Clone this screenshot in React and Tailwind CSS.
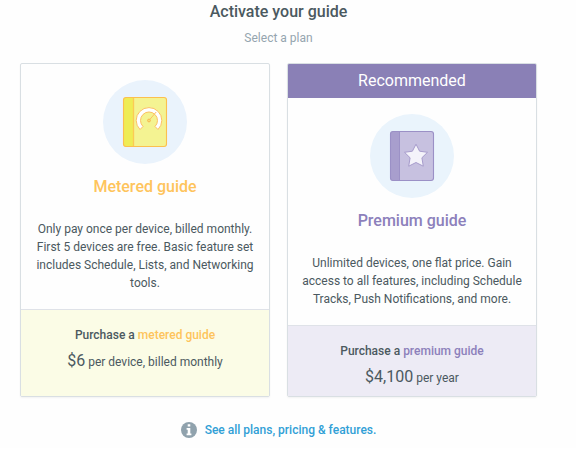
function MeteredIcon() {
  return (
    <svg viewBox="0 0 84 84" className="size-21" aria-hidden="true">
      <circle cx="42" cy="42" r="42" fill="#eaf3fc" />
      <rect x="20.5" y="17.5" width="43" height="49" rx="2.5" fill="#f4f392" />
      <path d="M30.5 17.5H23a2.5 2.5 0 0 0-2.5 2.5v44a2.5 2.5 0 0 0 2.5 2.5h7.5z" fill="#efec55" />
      <path d="M30.5 17.5v49" stroke="#fcca55" strokeWidth="1.3" />
      <rect x="20.5" y="17.5" width="43" height="49" rx="2.5" fill="none" stroke="#fcc04e" strokeWidth="1.1" />
      <path
        d="M37 49.5a12.8 12.8 0 1 1 18 0l-3-3a8.5 8.5 0 1 0-12 0z"
        fill="#fff"
        stroke="#fcc062"
        strokeWidth="1"
        strokeLinejoin="round"
      />
      <path d="M46.6 39.7l6.6-7.7" stroke="#fcc062" strokeWidth="1" />
      <circle cx="46" cy="40.5" r="1.4" fill="#f4e37a" stroke="#f9b84f" strokeWidth="1" />
    </svg>
  );
}

function PremiumIcon() {
  return (
    <svg viewBox="0 0 84 84" className="size-21" aria-hidden="true">
      <circle cx="42" cy="42" r="42" fill="#eaf4fc" />
      <rect x="20.5" y="17.5" width="43" height="49" rx="2.5" fill="#c7c1e0" />
      <path d="M29.5 17.5H23a2.5 2.5 0 0 0-2.5 2.5v44a2.5 2.5 0 0 0 2.5 2.5h6.5z" fill="#a89ecd" />
      <path d="M29.5 17.5v49" stroke="#9c91c6" strokeWidth="1" />
      <rect x="20.5" y="17.5" width="43" height="49" rx="2.5" fill="none" stroke="#9b90c6" strokeWidth="1.1" />
      <path
        d="M46 30.2l3.6 7 7.9 1.1-5.6 5.5 1.4 8.4-7.3-3.7-7.3 3.7 1.4-8.4-5.6-5.5 7.9-1.1z"
        fill="#f4f3fa"
        stroke="#a79ccc"
        strokeWidth="1"
        strokeLinejoin="round"
      />
    </svg>
  );
}

function InfoIcon() {
  return (
    <svg viewBox="0 0 16 16" className="size-4" aria-hidden="true">
      <circle cx="8" cy="8" r="8" fill="#90a2ad" />
      <path d="M6.7 2.2h2.6v2.4H6.7zM5.6 6h3.7v5.6h1.1v1.7H5.6v-1.7h1.1V7.7H5.6z" fill="#fff" />
    </svg>
  );
}

function PlanCard({ banner, icon, title, accent, description, footerTone, planName, price, unit }) {
  return (
    <article className="flex min-w-0 flex-1 flex-col overflow-hidden rounded-xs border border-[#d9dfe3] text-center shadow-xs">
      {banner && (
        <div className="bg-[#8a80b6] text-base leading-[34px] text-white">{banner}</div>
      )}
      <div className="flex flex-col items-center px-3 pt-4 pb-[17px]">
        {icon}
        <h2 className={`mt-[13px] text-base leading-5 font-medium ${accent}`}>{title}</h2>
        <p className="mt-[23px] text-xs leading-[18px]">{description}</p>
      </div>
      <div className={`flex-1 border-t border-[#dfe2e8] px-3 pt-[15px] pb-1.5 ${footerTone}`}>
        <h3 className="text-xs leading-5 font-medium">
          Purchase a <span className={accent}>{planName}</span>
        </h3>
        <p className="mt-1 text-xs leading-6">
          <span className="text-base leading-6">{price}</span> {unit}
        </p>
      </div>
    </article>
  );
}

export default function App() {
  return (
    <main className="bg-[#fefefe] pr-[39px] pb-2 pl-5 font-['Roboto','Liberation_Sans',sans-serif] text-[#4b5960]">
      <header className="text-center">
        <h1 className="text-base leading-6 font-medium">Activate your guide</h1>
        <p className="mt-1 text-xs leading-5 text-[#95a5af]">Select a plan</p>
      </header>
      <section className="mt-[15px] flex gap-[17px]">
        <PlanCard
          icon={<MeteredIcon />}
          title="Metered guide"
          accent="text-[#fec45c]"
          description="Only pay once per device, billed monthly. First 5 devices are free. Basic feature set includes Schedule, Lists, and Networking tools."
          footerTone="bg-[#fbfce6]"
          planName="metered guide"
          price="$6"
          unit="per device, billed monthly"
        />
        <PlanCard
          banner="Recommended"
          icon={<PremiumIcon />}
          title="Premium guide"
          accent="text-[#8c80bb]"
          description="Unlimited devices, one flat price. Gain access to all features, including Schedule Tracks, Push Notifications, and more."
          footerTone="bg-[#edebf5]"
          planName="premium guide"
          price="$4,100"
          unit="per year"
        />
      </section>
      <div className="mt-[23px] flex items-center justify-center gap-2">
        <InfoIcon />
        <a href="#plans" className="text-xs leading-5 font-medium text-[#31a0d6]">
          See all plans, pricing &amp; features.
        </a>
      </div>
    </main>
  );
}
